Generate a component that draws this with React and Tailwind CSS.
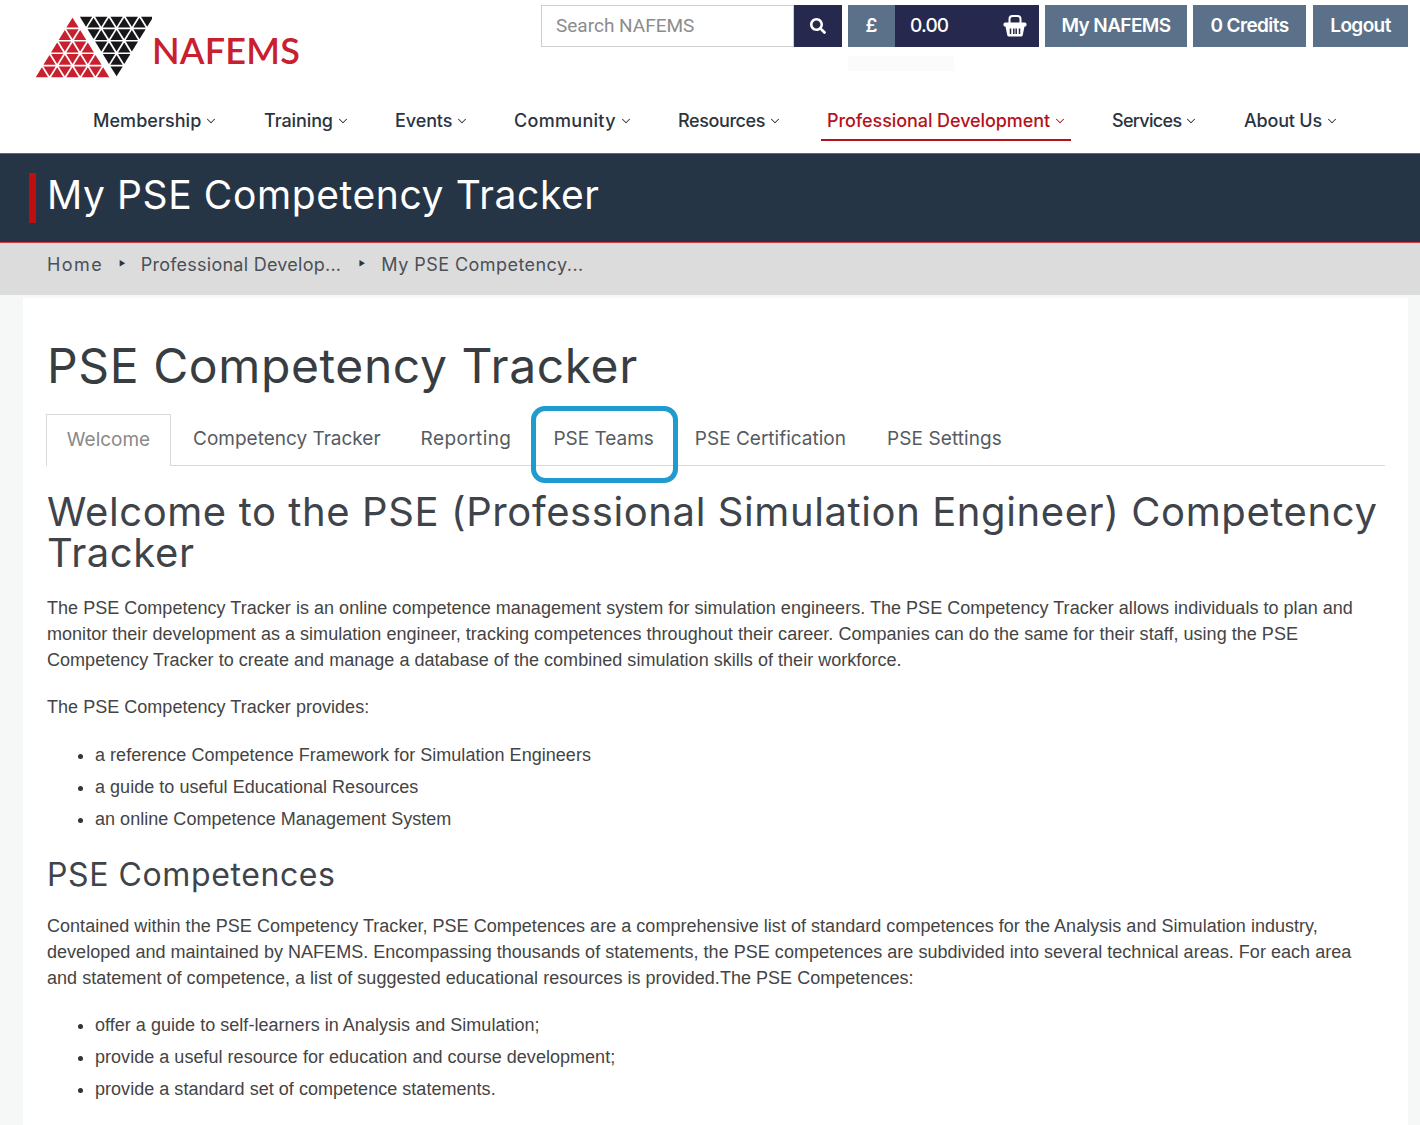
import React from "react";
import { ChevronDown } from "lucide-react";
import { FaSearch } from "react-icons/fa";

const F = "font-['Inter',sans-serif]";
const B = "font-['Liberation_Sans',Arial,sans-serif]";

function tri(cx, y, s, h, up, fill, k) {
  const p = up
    ? `${cx},${y + 1.7} ${cx + s / 2 - 1.5},${y + h - 0.8} ${cx - s / 2 + 1.5},${y + h - 0.8}`
    : `${cx - s / 2 + 1.5},${y + 0.8} ${cx + s / 2 - 1.5},${y + 0.8} ${cx},${y + h - 1.7}`;
  return <polygon key={k} points={p} fill={fill} />;
}

function Logo() {
  const s = 15.3, h = 12.4, out = [];
  for (let r = 0; r < 5; r++) {
    const y = 11 + r * h;
    for (let i = 0; i <= r; i++) out.push(tri(72.5 + (i - r / 2) * s, y, s, h, true, "#c8202f", `a${r}${i}`));
    for (let i = 0; i < r; i++) out.push(tri(72.5 + (i - (r - 1) / 2) * s, y, s, h, false, "#c8202f", `b${r}${i}`));
    for (let i = 0; i < 5 - r; i++) out.push(tri(86 + r * s / 2 + i * s, y, s, h, false, "#17171a", `c${r}${i}`));
    for (let i = 0; i < 4 - r; i++) out.push(tri(93.6 + r * s / 2 + i * s, y, s, h, true, "#17171a", `d${r}${i}`));
  }
  return (
    <div className="flex w-[541px] shrink-0 items-start">
      <svg width="152" height="80" viewBox="0 0 152 80" className="shrink-0">{out}</svg>
      <span className="mt-[23px] font-['Lato',sans-serif] text-[36px] leading-[44px] font-semibold tracking-[0.2px] text-[#c8202f]">NAFEMS</span>
    </div>
  );
}

function Basket() {
  return (
    <svg width="26" height="24" viewBox="0 0 26 24" fill="none">
      <path d="M7.5 9 V5 Q7.5 2 10.5 2 H15.5 Q18.5 2 18.5 5 V9" stroke="white" strokeWidth="2" />
      <rect x="1.5" y="8.5" width="23" height="4" rx="1.6" fill="white" />
      <path d="M3.4 12 L5.2 21 Q5.5 22.6 7 22.6 H19 Q20.5 22.6 20.8 21 L22.6 12 Z" fill="white" />
      <path d="M8.5 14.5 V20 M11.8 14.5 V20 M14.2 14.5 V20 M17.5 14.5 V20" stroke="#27284d" strokeWidth="1.5" />
    </svg>
  );
}

function Btn({ children, w }) {
  return <div className={`flex h-[42px] items-center justify-center bg-[#5a7189] ${F} text-[19px] font-semibold tracking-[-0.6px] text-white ${w}`}>{children}</div>;
}

function TopBar() {
  return (
    <div className="relative flex h-[93px] items-start pt-[5px]">
      <Logo />
      <div className="flex h-[42px] w-[253px] items-center border border-[#cfcfcf] bg-white pl-[14px] font-['Roboto',sans-serif] text-[19px] text-[#8c8c8c]">Search NAFEMS</div>
      <div className="flex h-[42px] w-[48px] items-center justify-center bg-[#27284d] text-white"><FaSearch size={16} /></div>
      <div className={`ml-[6px] flex h-[42px] w-[47px] items-center justify-center bg-[#5a7189] ${F} text-[19px] font-semibold text-white`}>£</div>
      <div className={`flex h-[42px] w-[144px] items-center justify-between bg-[#27284d] pl-[15px] pr-[11px] ${F} text-[19px] font-medium tracking-[-0.8px] text-white`}>
        <span>0.00</span>
        <Basket />
      </div>
      <div className="ml-[6px] flex gap-[6px]">
        <Btn w="w-[142px]">My NAFEMS</Btn>
        <Btn w="w-[113px]">0 Credits</Btn>
        <Btn w="ml-[1px] w-[95px]">Logout</Btn>
      </div>
      <div className="absolute left-[848px] top-[56px] h-[15px] w-[106px] bg-[#fbfbfb]" />
    </div>
  );
}

const nav = [
  ["Membership", "w-[171px] tracking-[0.05px]"],
  ["Training", "w-[131px] tracking-[-0.1px]"],
  ["Events", "w-[119px] tracking-[-0.1px]"],
  ["Community", "w-[164px] tracking-[0.3px]"],
  ["Resources", "w-[149px] tracking-[-0.4px]"],
  ["Professional Development", "w-[285px] tracking-[-0.08px]", true],
  ["Services", "w-[132px] tracking-[-0.7px]"],
  ["About Us", "tracking-[-0.2px]"],
];

function Nav() {
  return (
    <div className={`flex h-[60px] items-start ${F} pl-[93px] text-[18px] font-medium text-[#2b3440]`}>
      {nav.map(([t, w, a]) => (
        <div key={t} className={`relative flex h-[54px] shrink-0 items-center ${w} ${a ? "text-[#b5121b]" : ""}`}>
          <span>{t}</span>
          <ChevronDown size={14} strokeWidth={1.8} className="ml-[3px] mt-[1px]" />
          {a && <div className="absolute bottom-[6px] left-[-6px] h-[2px] w-[250px] bg-[#b5121b]" />}
        </div>
      ))}
    </div>
  );
}

function Banner() {
  return (
    <div className="flex h-[90px] items-center border-y border-[#d33a45] bg-[#263545] pl-[29px]">
      <div className="h-[50px] w-[7px] bg-[#c00d0d]" />
      <h1 className={`mb-[6px] ml-[11px] ${F} text-[39px] font-normal tracking-[0.6px] text-white`}>My PSE Competency Tracker</h1>
    </div>
  );
}

function Crumbs() {
  return (
    <div className={`flex h-[52px] items-center bg-[#dcdcdc] pb-[10px] pl-[47px] ${F} text-[18px] tracking-[0.25px] text-[#4a5058]`}>
      <span className="w-[56px] tracking-[1.4px]">Home</span>
      <span className="ml-[16px] mr-[15px] text-[7px] text-[#333]">▶</span>
      <span className="w-[200px] whitespace-nowrap">Professional Develop...</span>
      <span className="ml-[18px] mr-[16px] text-[7px] text-[#333]">▶</span>
      <span className="whitespace-nowrap tracking-[0.45px]">My PSE Competency...</span>
    </div>
  );
}

function Tabs() {
  const tabs = [
    ["Competency Tracker", "ml-[22px]"],
    ["Reporting", "ml-[40px] tracking-[0.4px]"],
    ["PSE Teams", "ml-[42px]"],
    ["PSE Certification", "ml-[41px]"],
    ["PSE Settings", "ml-[41px] tracking-[0.1px]"],
  ];
  return (
    <div className={`relative -ml-[1px] mt-[16px] mr-[23px] flex h-[52px] items-center border-b border-[#d9d9d9] ${F} text-[19px] text-[#555b61]`}>
      <div className="mb-[-1px] flex h-[52px] w-[125px] items-center justify-center border border-b-0 border-[#d9d9d9] bg-white pb-[1px] text-[#8a8a8a]">Welcome</div>
      {tabs.map(([t, m]) => <span key={t} className={m}>{t}</span>)}
      <div className="absolute left-[485px] top-[-8px] h-[77px] w-[147px] rounded-[14px] border-[5px] border-[#1f9bcf]" />
    </div>
  );
}

function List({ items, m }) {
  return (
    <ul className={`${m} list-disc pl-[48px] marker:text-[#333]`}>
      {items.map((t) => <li key={t} className="h-[32px] leading-[26px]">{t}</li>)}
    </ul>
  );
}

export default function App() {
  return (
    <div className="min-h-[1125px] w-[1420px] overflow-hidden bg-[#f6f8f8]">
      <div className="bg-white">
        <TopBar />
        <Nav />
      </div>
      <Banner />
      <Crumbs />
      <main className="ml-[23px] mr-[12px] mt-[3px] h-[828px] bg-white pl-[24px]">
        <h2 className={`pt-[36px] ${F} text-[48px] leading-[64px] font-normal tracking-[0.6px] text-[#383d42]`}>PSE Competency Tracker</h2>
        <Tabs />
        <h3 className={`mt-[25px] mr-[8px] ${F} text-[40px] leading-[41px] tracking-[0.6px] text-[#3f444a]`}>Welcome to the PSE (Professional Simulation Engineer) Competency Tracker</h3>
        <div className={`${B} text-[18px] leading-[26px] tracking-[0.03px] text-[#444444]`}>
          <p className="mt-[22px] mr-[40px]">The PSE Competency Tracker is an online competence management system for simulation engineers. The PSE Competency Tracker allows individuals to plan and monitor their development as a simulation engineer, tracking competences throughout their career. Companies can do the same for their staff, using the PSE Competency Tracker to create and manage a database of the combined simulation skills of their workforce.</p>
          <p className="mt-[21px]">The PSE Competency Tracker provides:</p>
          <List m="mt-[22px]" items={["a reference Competence Framework for Simulation Engineers", "a guide to useful Educational Resources", "an online Competence Management System"]} />
          <h3 className={`mt-[17px] ${F} text-[32px] leading-[40px] tracking-[0.6px] text-[#3f444a]`}>PSE Competences</h3>
          <p className="mt-[18px] mr-[40px]">Contained within the PSE Competency Tracker, PSE Competences are a comprehensive list of standard competences for the Analysis and Simulation industry, developed and maintained by NAFEMS. Encompassing thousands of statements, the PSE competences are subdivided into several technical areas. For each area and statement of competence, a list of suggested educational resources is provided.The PSE Competences:</p>
          <List m="mt-[21px]" items={["offer a guide to self-learners in Analysis and Simulation;", "provide a useful resource for education and course development;", "provide a standard set of competence statements."]} />
        </div>
      </main>
    </div>
  );
}
